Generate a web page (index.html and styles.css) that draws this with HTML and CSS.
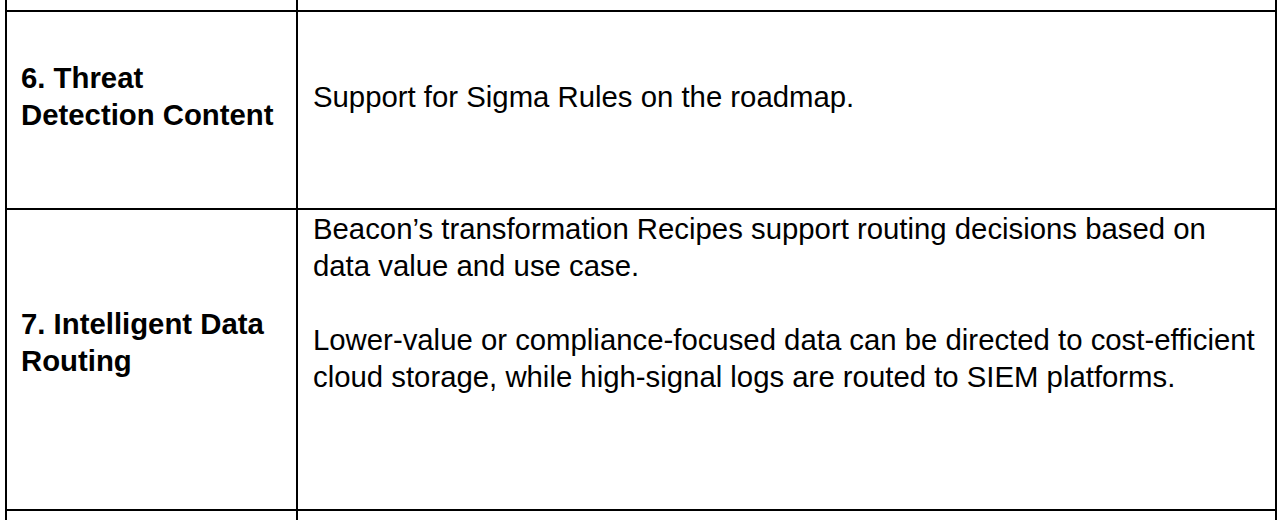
FILE: index.html
```html
<!DOCTYPE html>
<html lang="en">
<head>
<meta charset="utf-8">
<title>Capabilities table</title>
<link rel="stylesheet" href="styles.css">
</head>
<body>
<div class="sheet">
  <div class="cell first stub-top"></div>
  <div class="cell stub-top"></div>

  <div class="cell first label row-a"><p>6. Threat Detection Content</p></div>
  <div class="cell body row-a"><p>Support for Sigma Rules on the roadmap.</p></div>

  <div class="cell first label row-b"><p>7. Intelligent Data Routing</p></div>
  <div class="cell body top row-b">
    <p>Beacon’s transformation Recipes support routing decisions based on data value and use case.</p>
    <p>Lower-value or compliance-focused data can be directed to cost-efficient cloud storage, while high-signal logs are routed to SIEM platforms.</p>
  </div>

  <div class="cell first stub-bottom"></div>
  <div class="cell stub-bottom"></div>
</div>
</body>
</html>
```
FILE: styles.css
```css
html, body {
  margin: 0;
  padding: 0;
  background: #ffffff;
}

body {
  font-family: "Liberation Sans", Arial, Helvetica, sans-serif;
  color: #000000;
  font-size: 29.33px;
  line-height: 37px;
  overflow: hidden;
}

.sheet {
  display: grid;
  grid-template-columns: 293px 979px;
  margin-left: 5px;
  width: 1272px;
}

.cell {
  box-sizing: border-box;
  border-right: 2px solid #000;
  border-bottom: 2px solid #000;
  padding: 0 10px 0 15px;
  display: flex;
  flex-direction: column;
  justify-content: center;
}

.cell.first {
  border-left: 2px solid #000;
  padding-left: 14px;
  padding-right: 16px;
}

.cell p {
  margin: 0;
}

.label {
  font-weight: bold;
}

.stub-top {
  height: 12px;
}

.stub-bottom {
  height: 12px;
  border-bottom: none;
}

.row-a {
  height: 198px;
  padding-bottom: 28px;
}

.row-b {
  height: 301px;
  padding-bottom: 36px;
}

.cell.top {
  justify-content: flex-start;
  padding-top: 0;
  padding-bottom: 0;
}

.cell.top p + p {
  margin-top: 37px;
}
```
